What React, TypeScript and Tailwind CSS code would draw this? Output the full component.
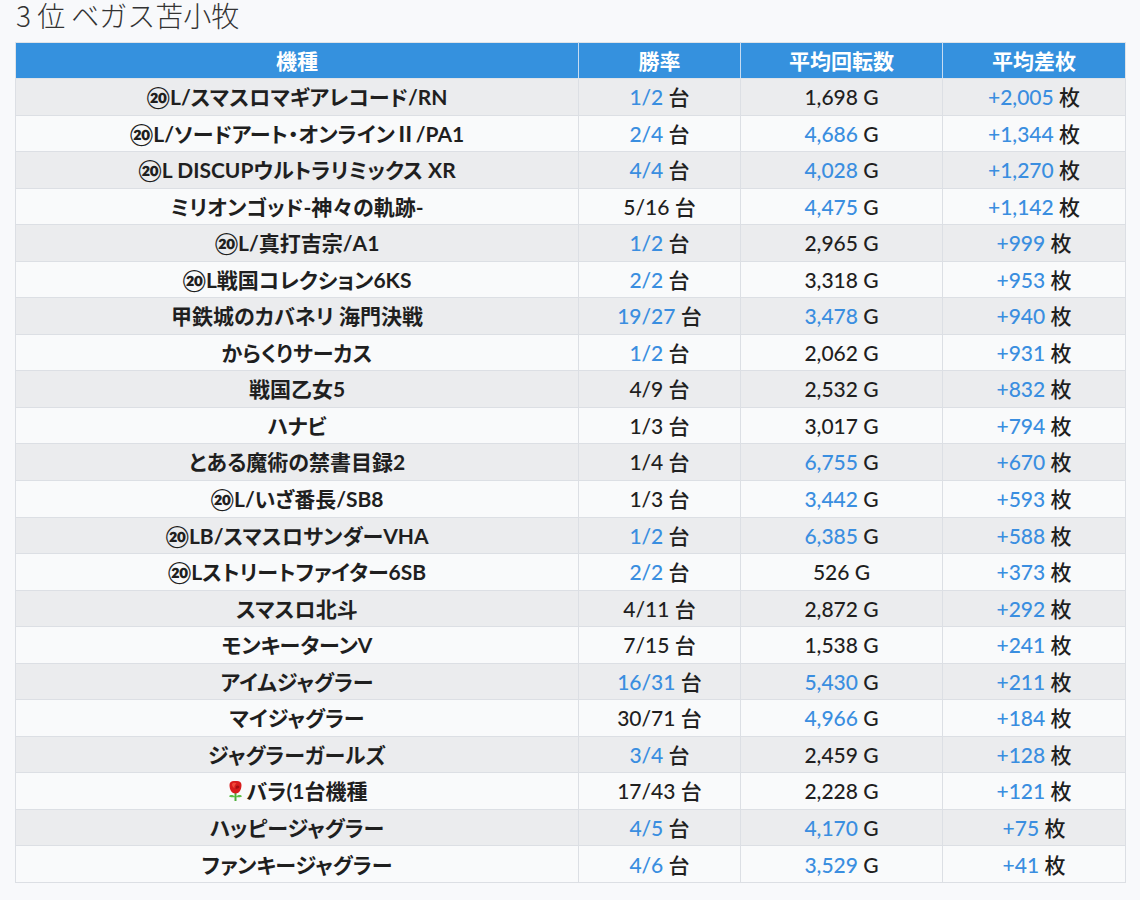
import React from "react";

type Row = {
  name: string;
  rose?: boolean;
  win: string;
  winHi: boolean;
  spins: string;
  spinsHi: boolean;
  diff: string;
};

const rows: Row[] = [
  { name: "⑳L/スマスロマギアレコード/RN", win: "1/2", winHi: true, spins: "1,698", spinsHi: false, diff: "+2,005" },
  { name: "⑳L/ソードアート・オンラインⅡ/PA1", win: "2/4", winHi: true, spins: "4,686", spinsHi: true, diff: "+1,344" },
  { name: "⑳L DISCUPウルトラリミックス XR", win: "4/4", winHi: true, spins: "4,028", spinsHi: true, diff: "+1,270" },
  { name: "ミリオンゴッド-神々の軌跡-", win: "5/16", winHi: false, spins: "4,475", spinsHi: true, diff: "+1,142" },
  { name: "⑳L/真打吉宗/A1", win: "1/2", winHi: true, spins: "2,965", spinsHi: false, diff: "+999" },
  { name: "⑳L戦国コレクション6KS", win: "2/2", winHi: true, spins: "3,318", spinsHi: false, diff: "+953" },
  { name: "甲鉄城のカバネリ 海門決戦", win: "19/27", winHi: true, spins: "3,478", spinsHi: true, diff: "+940" },
  { name: "からくりサーカス", win: "1/2", winHi: true, spins: "2,062", spinsHi: false, diff: "+931" },
  { name: "戦国乙女5", win: "4/9", winHi: false, spins: "2,532", spinsHi: false, diff: "+832" },
  { name: "ハナビ", win: "1/3", winHi: false, spins: "3,017", spinsHi: false, diff: "+794" },
  { name: "とある魔術の禁書目録2", win: "1/4", winHi: false, spins: "6,755", spinsHi: true, diff: "+670" },
  { name: "⑳L/いざ番長/SB8", win: "1/3", winHi: false, spins: "3,442", spinsHi: true, diff: "+593" },
  { name: "⑳LB/スマスロサンダーVHA", win: "1/2", winHi: true, spins: "6,385", spinsHi: true, diff: "+588" },
  { name: "⑳Lストリートファイター6SB", win: "2/2", winHi: true, spins: "526", spinsHi: false, diff: "+373" },
  { name: "スマスロ北斗", win: "4/11", winHi: false, spins: "2,872", spinsHi: false, diff: "+292" },
  { name: "モンキーターンV", win: "7/15", winHi: false, spins: "1,538", spinsHi: false, diff: "+241" },
  { name: "アイムジャグラー", win: "16/31", winHi: true, spins: "5,430", spinsHi: true, diff: "+211" },
  { name: "マイジャグラー", win: "30/71", winHi: false, spins: "4,966", spinsHi: true, diff: "+184" },
  { name: "ジャグラーガールズ", win: "3/4", winHi: true, spins: "2,459", spinsHi: false, diff: "+128" },
  { name: "バラ(1台機種", rose: true, win: "17/43", winHi: false, spins: "2,228", spinsHi: false, diff: "+121" },
  { name: "ハッピージャグラー", win: "4/5", winHi: true, spins: "4,170", spinsHi: true, diff: "+75" },
  { name: "ファンキージャグラー", win: "4/6", winHi: true, spins: "3,529", spinsHi: true, diff: "+41" },
];

// emoji fonts aren't available, so the rose is drawn by hand
const Rose = () => (
  <svg width="17" height="22" viewBox="0 0 17 22" className="inline-block align-[-3px] mr-[3px]">
    <path d="M8.5 13 L8.5 21" stroke="#4caf3a" strokeWidth="2" />
    <path d="M8.5 17 C6 14.5 3 14.5 2 16.5 C4.5 17.5 6.5 17.5 8.5 17 Z" fill="#5cbf45" />
    <path d="M8.5 17 C11 14.5 14 14.5 15 16.5 C12.5 17.5 10.5 17.5 8.5 17 Z" fill="#5cbf45" />
    <path d="M2.5 5 C2.5 1.5 5 0.5 8.5 1 C12 0.5 14.5 1.5 14.5 5 C14.5 10 12 13.5 8.5 13.5 C5 13.5 2.5 10 2.5 5 Z" fill="#d81c1c" />
    <path d="M5 4 C6 2.5 8 2.3 9.5 3.5 C8 4.5 7 6 7.5 8 C6 7.5 5 6 5 4 Z" fill="#f04a3a" />
    <path d="M9 6 C10.5 5 12 5.5 12.5 7 C11.5 8.5 10 9 8.5 8.5 Z" fill="#a30f12" />
  </svg>
);

const blue = "text-[#3a8ee0]";

export default function App() {
  return (
    <div className="min-h-[900px] bg-[#f8f9fb] px-[15px] font-['Lato','Noto_Sans_CJK_JP',sans-serif] text-[#1f1f1f]">
      <h1 className="h-[42px] pl-[1px] text-[28px] leading-[31px] font-light text-[#333] font-['Noto_Sans_CJK_JP','Noto_Sans',sans-serif]">
        3 位 ベガス苫小牧
      </h1>
      <table className="w-[1110px] table-fixed border-collapse text-center text-[21px]">
        <colgroup>
          <col className="w-[563px]" />
          <col className="w-[162px]" />
          <col className="w-[202px]" />
          <col className="w-[183px]" />
        </colgroup>
        <thead>
          <tr className="h-[36px] bg-[#3591de] text-white font-bold">
            <th className="border border-[#dfe3e8] border-r-[#c7dcf2]">機種</th>
            <th className="border border-[#dfe3e8] border-r-[#c7dcf2]">勝率</th>
            <th className="border border-[#dfe3e8] border-r-[#c7dcf2]">平均回転数</th>
            <th className="border border-[#dfe3e8]">平均差枚</th>
          </tr>
        </thead>
        <tbody>
          {rows.map((r, i) => (
            <tr key={i} className={`h-[36.55px] ${i % 2 === 0 ? "bg-[#ebecee]" : "bg-[#f9fafb]"}`}>
              <td className="border border-[#dcdfe4] font-bold [font-feature-settings:'palt'] whitespace-nowrap">
                {r.rose && <Rose />}
                {r.name}
              </td>
              <td className="border border-[#dcdfe4] font-medium">
                <span className={r.winHi ? blue : ""}>{r.win}</span> 台
              </td>
              <td className="border border-[#dcdfe4] font-medium">
                <span className={r.spinsHi ? blue : ""}>{r.spins}</span> G
              </td>
              <td className="border border-[#dcdfe4] font-medium">
                <span className={blue}>{r.diff}</span> 枚
              </td>
            </tr>
          ))}
        </tbody>
      </table>
    </div>
  );
}
